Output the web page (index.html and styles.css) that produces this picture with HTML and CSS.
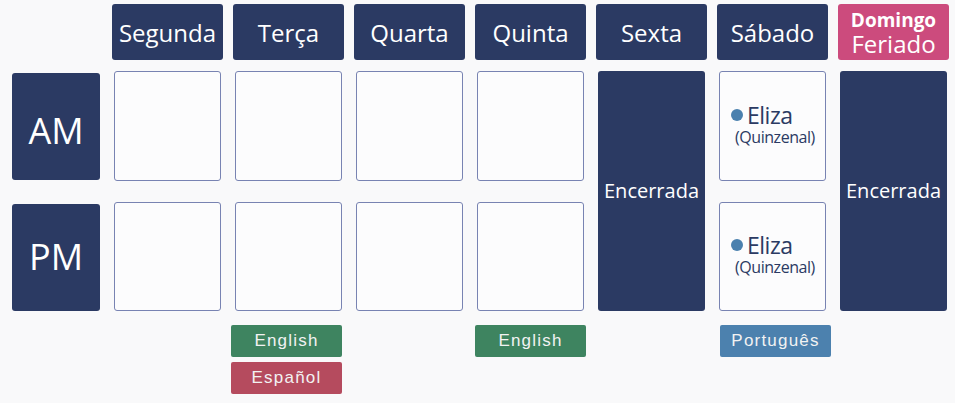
FILE: index.html
```html
<!DOCTYPE html>
<html lang="pt">
<head>
<meta charset="utf-8">
<title>Horário</title>
<link rel="stylesheet" href="styles.css">
</head>
<body>
<div class="schedule">
  <div class="day c1">Segunda</div>
  <div class="day c2">Terça</div>
  <div class="day c3">Quarta</div>
  <div class="day c4">Quinta</div>
  <div class="day c5">Sexta</div>
  <div class="day c6">Sábado</div>
  <div class="day holiday c7"><span class="hol-top">Domingo</span><span class="hol-bottom">Feriado</span></div>

  <div class="period am">AM</div>
  <div class="cell am c1"></div>
  <div class="cell am c2"></div>
  <div class="cell am c3"></div>
  <div class="cell am c4"></div>
  <div class="closed c5">Encerrada</div>
  <div class="cell am c6"><div class="slot"><div class="name"><span class="dot"></span>Eliza</div><div class="freq">(Quinzenal)</div></div></div>
  <div class="closed c7">Encerrada</div>

  <div class="period pm">PM</div>
  <div class="cell pm c1"></div>
  <div class="cell pm c2"></div>
  <div class="cell pm c3"></div>
  <div class="cell pm c4"></div>
  <div class="cell pm c6"><div class="slot"><div class="name"><span class="dot"></span>Eliza</div><div class="freq">(Quinzenal)</div></div></div>

  <div class="tags c2 shift-l"><span class="tag green">English</span><span class="tag red">Español</span></div>
  <div class="tags c4"><span class="tag green">English</span></div>
  <div class="tags c6 shift-r"><span class="tag blue">Português</span></div>
</div>
</body>
</html>
```
FILE: styles.css
```css
html, body {
  margin: 0;
  background: #f9f9fa;
}
body {
  width: 955px;
  height: 403px;
  overflow: hidden;
  font-family: "Open Sans", "Noto Sans", sans-serif;
}
.schedule {
  display: grid;
  grid-template-columns: 90px repeat(7, 111px);
  grid-template-rows: 56px 110px 119px auto;
  column-gap: 10px;
  row-gap: 11px;
  padding: 4px 0 0 12px;
}
.c1 { grid-column: 2; }
.c2 { grid-column: 3; }
.c3 { grid-column: 4; }
.c4 { grid-column: 5; }
.c5 { grid-column: 6; }
.c6 { grid-column: 7; }
.c7 { grid-column: 8; }
.day {
  grid-row: 1;
  background: #2b3a63;
  color: #fff;
  border-radius: 3px;
  display: flex;
  align-items: center;
  justify-content: center;
  font-size: 24px;
  line-height: 1;
  padding-top: 2px;
  box-sizing: border-box;
}
.holiday {
  background: #cc4b7d;
  flex-direction: column;
  padding-top: 1px;
}
.hol-top {
  font-weight: 700;
  font-size: 19px;
  line-height: 22px;
}
.hol-bottom {
  font-size: 24px;
  line-height: 26px;
}
.period {
  grid-column: 1;
  width: 88px;
  height: 107px;
  box-sizing: border-box;
  background: #2b3a63;
  color: #fff;
  border-radius: 3px;
  display: flex;
  align-items: center;
  justify-content: center;
  font-size: 36px;
}
.period.am { grid-row: 2; align-self: center; padding-top: 8px; }
.period.pm { grid-row: 3; align-self: end; padding-bottom: 2px; }
.cell {
  width: 107px;
  box-sizing: border-box;
  border: 1.5px solid #7883b2;
  border-radius: 3px;
  background: #fcfcfd;
  justify-self: center;
  display: flex;
  align-items: center;
}
.cell.am { grid-row: 2; height: 110px; }
.cell.pm { grid-row: 3; height: 109px; align-self: end; }
.closed {
  grid-row: 2 / span 2;
  width: 107px;
  justify-self: center;
  background: #2b3a63;
  color: #fff;
  border-radius: 3px;
  display: flex;
  align-items: center;
  justify-content: center;
  font-size: 20px;
  padding-bottom: 2px;
  box-sizing: border-box;
}
.slot {
  display: flex;
  flex-direction: column;
  padding-left: 11px;
  padding-bottom: 2px;
  color: #2b3a63;
}
.name {
  display: flex;
  align-items: center;
  font-size: 23px;
  line-height: 24px;
  letter-spacing: -0.5px;
}
.dot {
  width: 12px;
  height: 12px;
  border-radius: 50%;
  background: #4a80ae;
  margin-right: 4px;
  flex: none;
}
.freq {
  font-size: 16px;
  line-height: 21px;
  margin-left: 4px;
  letter-spacing: -0.45px;
}
.tags {
  grid-row: 4;
  display: flex;
  flex-direction: column;
  gap: 5px;
  padding-top: 3px;
}
.shift-l { margin-left: -2px; }
.shift-r { margin-left: 3px; }
.tag {
  width: 111px;
  height: 32px;
  border-radius: 2px;
  color: #f2f2f2;
  font-family: "Liberation Sans", Arial, sans-serif;
  font-size: 17px;
  letter-spacing: 1.2px;
  display: flex;
  align-items: center;
  justify-content: center;
}
.green { background: #3e8460; }
.red { background: #b54b5e; }
.blue { background: #4c81ae; }
```
